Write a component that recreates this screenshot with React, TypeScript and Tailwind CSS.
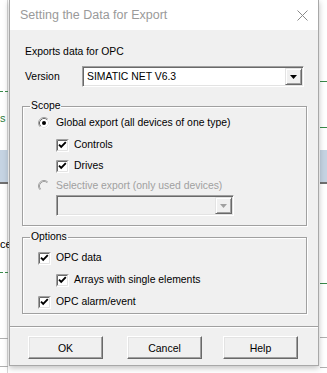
import React from "react";

function CheckBox() {
  return (
    <svg width="13" height="13" viewBox="0 0 13 13" className="shrink-0">
      <rect x="0" y="0" width="13" height="13" fill="#ffffff" />
      <path d="M0.5 12.5 V0.5 H12.5" stroke="#a0a0a0" fill="none" />
      <path d="M1.5 11.5 V1.5 H11.5" stroke="#696969" fill="none" />
      <path d="M1.5 11.5 H11.5 V1.5" stroke="#e3e3e3" fill="none" />
      <path d="M3 5.6 L5.2 7.8 L9.8 3.2" stroke="#000" strokeWidth="1.9" fill="none" />
    </svg>
  );
}

function Radio({ checked, disabled }: { checked?: boolean; disabled?: boolean }) {
  return (
    <svg width="12" height="12" viewBox="0 0 12 12" className="shrink-0">
      <circle cx="6" cy="6" r="5.5" fill={disabled ? "#f0f0f0" : "#ffffff"} />
      <path d="M2.11 9.89 A5.5 5.5 0 0 1 9.89 2.11" stroke="#a0a0a0" fill="none" />
      <path d="M2.82 9.18 A4.5 4.5 0 0 1 9.18 2.82" stroke={disabled ? "#a0a0a0" : "#696969"} fill="none" />
      <path d="M2.82 9.18 A4.5 4.5 0 0 0 9.18 2.82" stroke={disabled ? "#f0f0f0" : "#e3e3e3"} fill="none" />
      {checked && <circle cx="6" cy="6" r="2" fill="#000" />}
    </svg>
  );
}

function ComboArrow({ disabled }: { disabled?: boolean }) {
  return (
    <div className="w-[17px] h-full bg-[#f0f0f0] border border-t-[#e3e3e3] border-l-[#e3e3e3] border-b-[#696969] border-r-[#696969] shadow-[inset_1px_1px_0_#ffffff,inset_-1px_-1px_0_#a0a0a0] flex items-center justify-center">
      <svg width="7" height="4" viewBox="0 0 7 4">
        <path d="M0 0 H7 L3.5 4 Z" fill={disabled ? "#a0a0a0" : "#000"} />
      </svg>
    </div>
  );
}

function Btn({ label, className }: { label: string; className?: string }) {
  return (
    <div
      className={
        "w-[75px] h-[23px] flex items-center justify-center bg-[#f0f0f0] border border-t-white border-l-white border-b-[#696969] border-r-[#696969] shadow-[inset_-1px_-1px_0_#a0a0a0,inset_1px_1px_0_#e3e3e3] text-[10.5px] text-black " +
        (className || "")
      }
    >
      {label}
    </div>
  );
}

export default function App() {
  return (
    <div className="relative w-[327px] h-[373px] bg-white overflow-hidden font-['Liberation_Sans',Arial,sans-serif]">
      {/* background content behind the dialog */}
      <div className="absolute left-[7px] top-0 w-px h-full bg-[#d6d6d6]" />
      <div className="absolute left-0 top-[91px] w-[8px] border-t border-dashed border-[#3a8a4a]" />
      <div className="absolute left-0 top-[113px] text-[11px] text-[#2a7a3a] leading-none">s</div>
      <div className="absolute left-0 top-[150px] w-[8px] h-[32px] bg-[#c5d3e2]" />
      <div className="absolute left-0 top-[182px] w-[8px] h-[2px] bg-[#707070]" />
      <div className="absolute left-0 top-[239px] text-[11px] text-black leading-none">ce</div>
      <div className="absolute left-0 top-[272px] w-[8px] border-t border-dashed border-[#3a8a4a]" />
      <div className="absolute left-0 top-[338px] w-[8px] h-px bg-[#b0b0b0]" />
      <div className="absolute left-0 top-[366px] w-[8px] h-px bg-[#b0b0b0]" />

      <div className="absolute left-[320px] top-[81px] w-[7px] h-px bg-[#3a8a4a]" />
      <div className="absolute left-[320px] top-[127px] w-[7px] h-px bg-[#3a8a4a]" />
      <div className="absolute left-[320px] top-[150px] w-[7px] h-[32px] bg-[#c5d3e2]" />
      <div className="absolute left-[320px] top-[182px] w-[7px] h-[2px] bg-[#707070]" />
      <div className="absolute left-[320px] top-[283px] w-[7px] h-px bg-[#3a8a4a]" />
      <div className="absolute left-[320px] top-[337px] w-[7px] h-px bg-[#b0b0b0]" />
      <div className="absolute left-[320px] top-[367px] w-[7px] h-px bg-[#b0b0b0]" />

      {/* dialog */}
      <div className="relative ml-[9px] w-[310px] h-[366px] flex flex-col bg-[#f0f0f0] border-x border-b border-[#a8a8a8] shadow-[0_2px_6px_rgba(0,0,0,0.25)]">
        {/* title bar */}
        <div className="h-[30px] shrink-0 bg-white flex items-center justify-between pl-[10px] pr-[10px]">
          <span className="text-[12.5px] text-[#9a9a9a]">
            Setting the Data for Export
          </span>
          <svg width="11" height="11" viewBox="0 0 11 11">
            <path d="M0.5 0.5 L10.5 10.5 M10.5 0.5 L0.5 10.5" stroke="#8a8a8a" strokeWidth="1" />
          </svg>
        </div>

        {/* body */}
        <div className="flex flex-col text-[10.4px] text-black leading-[14px]">
          <div className="mt-[15px] ml-[15px] h-[14px]">Exports data for OPC</div>

          <div className="mt-[7px] ml-[15px] flex items-center h-[21px]">
            <span className="w-[57px]">Version</span>
            <div className="w-[222px] h-[21px] bg-white flex items-stretch border border-t-[#a0a0a0] border-l-[#a0a0a0] border-b-white border-r-white shadow-[inset_1px_1px_0_#696969,inset_-1px_-1px_0_#e3e3e3] p-[1px]">
              <div className="flex-1 flex items-center pl-[3px]">SIMATIC NET V6.3</div>
              <ComboArrow />
            </div>
          </div>

          {/* Scope */}
          <fieldset className="mt-[12px] ml-[12px] w-[285px] border border-[#a0a0a0] shadow-[inset_1px_1px_0_#ffffff,1px_1px_0_#ffffff] pb-[9px]">
            <legend className="ml-[7px] px-[1px] leading-[14px]">Scope</legend>
            <div className="h-[20px] flex items-center pl-[15px]">
              <Radio checked />
              <span className="ml-[6px]">Global export (all devices of one type)</span>
            </div>
            <div className="mt-[2px] h-[20px] flex items-center pl-[33px]">
              <CheckBox />
              <span className="ml-[5px]">Controls</span>
            </div>
            <div className="mt-[1px] h-[20px] flex items-center pl-[33px]">
              <CheckBox />
              <span className="ml-[5px]">Drives</span>
            </div>
            <div className="h-[19px] flex items-center pl-[15px] text-[#a0a0a0]">
              <Radio disabled />
              <span className="ml-[6px]">Selective export (only used devices)</span>
            </div>
            <div className="ml-[33px] w-[178px] h-[21px] bg-[#f0f0f0] flex items-stretch border border-t-[#a0a0a0] border-l-[#a0a0a0] border-b-white border-r-white shadow-[inset_1px_1px_0_#696969,inset_-1px_-1px_0_#e3e3e3] p-[1px]">
              <div className="flex-1" />
              <ComboArrow disabled />
            </div>
          </fieldset>

          {/* Options */}
          <fieldset className="mt-[4px] ml-[12px] w-[285px] border border-[#a0a0a0] shadow-[inset_1px_1px_0_#ffffff,1px_1px_0_#ffffff] pb-[1px]">
            <legend className="ml-[7px] px-[1px] leading-[14px]">Options</legend>
            <div className="mt-[4px] h-[20px] flex items-center pl-[15px]">
              <CheckBox />
              <span className="ml-[5px]">OPC data</span>
            </div>
            <div className="mt-[2px] h-[20px] flex items-center pl-[33px]">
              <CheckBox />
              <span className="ml-[5px]">Arrays with single elements</span>
            </div>
            <div className="mt-[2px] h-[20px] flex items-center pl-[15px]">
              <CheckBox />
              <span className="ml-[5px]">OPC alarm/event</span>
            </div>
          </fieldset>

          {/* separator */}
          <div className="mt-[12px] h-[2px] border-t border-[#a0a0a0] border-b border-b-white" />

          {/* buttons */}
          <div className="mt-[8px] flex">
            <Btn label="OK" className="ml-[18px]" />
            <Btn label="Cancel" className="ml-[24px]" />
            <Btn label="Help" className="ml-[21px]" />
          </div>
        </div>
      </div>
    </div>
  );
}
